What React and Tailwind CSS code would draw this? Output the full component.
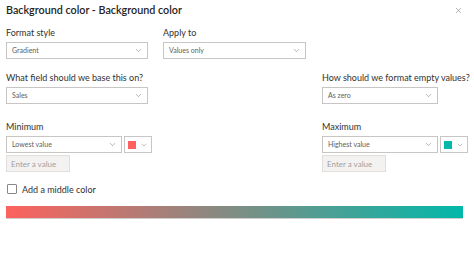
import { ChevronDown, X } from 'lucide-react'

function Dropdown({ value, className = '' }) {
  return (
    <div
      className={`h-[17px] border border-[#c8c6c4] bg-white flex items-center justify-between pl-[5px] pr-[4px] ${className}`}
    >
      <span className="text-[7px] text-[#605e5c] leading-none">{value}</span>
      <ChevronDown size={9} strokeWidth={1.2} className="text-[#605e5c]" />
    </div>
  )
}

function ColorPicker({ color }) {
  return (
    <div className="h-[17px] w-[28px] border border-[#c8c6c4] bg-white flex items-center justify-between pl-[3px] pr-[3px]">
      <span className="w-[8px] h-[8px]" style={{ background: color }} />
      <ChevronDown size={8} strokeWidth={1.2} className="text-[#605e5c]" />
    </div>
  )
}

function Label({ children, className = '' }) {
  return <div className={`text-[9px] leading-[13px] text-[#323130] whitespace-nowrap ${className}`}>{children}</div>
}

function ValueBlock({ label, value, color }) {
  return (
    <div className="flex flex-col">
      <Label>{label}</Label>
      <div className="flex gap-[2px] mt-[3px]">
        <Dropdown value={value} className="w-[116px]" />
        <ColorPicker color={color} />
      </div>
      <div className="mt-[2px] w-[64px] h-[17px] bg-[#f3f2f1] border border-[#e1dfdd] flex items-center px-[4px]">
        <span className="text-[8px] text-[#a19f9d] leading-none">Enter a value</span>
      </div>
    </div>
  )
}

export default function App() {
  return (
    <div
      className="w-[474px] h-[254px] bg-white px-[6px] pt-0 text-[#252423]"
      style={{ fontFamily: 'Lato, "Open Sans", sans-serif' }}
    >
      <div className="flex items-center justify-between h-[20px]">
        <span className="text-[10.75px] font-semibold text-[#252423]">Background color - Background color</span>
        <X size={9} strokeWidth={1.2} className="text-[#605e5c] mr-[5px]" />
      </div>

      <div className="flex gap-[15px] mt-[6px]">
        <div className="w-[142px]">
          <Label>Format style</Label>
          <Dropdown value="Gradient" className="mt-[3px]" />
        </div>
        <div className="w-[143px]">
          <Label>Apply to</Label>
          <Dropdown value="Values only" className="mt-[3px]" />
        </div>
      </div>

      <div className="flex mt-[12px]">
        <div className="w-[316px] shrink-0">
          <Label>What field should we base this on?</Label>
          <Dropdown value="Sales" className="mt-[3px] w-[142px]" />
        </div>
        <div>
          <Label>How should we format empty values?</Label>
          <Dropdown value="As zero" className="mt-[3px] w-[116px]" />
        </div>
      </div>

      <div className="flex mt-[16px]">
        <div className="w-[316px] shrink-0">
          <ValueBlock label="Minimum" value="Lowest value" color="#fd625e" />
        </div>
        <ValueBlock label="Maximum" value="Highest value" color="#01b8aa" />
      </div>

      <div className="flex items-center gap-[5px] mt-[12px] ml-[1px]">
        <span className="w-[10px] h-[10px] border border-[#8a8886] rounded-[1px] bg-white" />
        <span className="text-[9px] text-[#323130] leading-none">Add a middle color</span>
      </div>

      <div className="mt-[12px] h-[13px] w-[457px] bg-linear-to-r/srgb from-[#fd625e] to-[#01b8aa] border-b border-[#d0cfce]" />
    </div>
  )
}
